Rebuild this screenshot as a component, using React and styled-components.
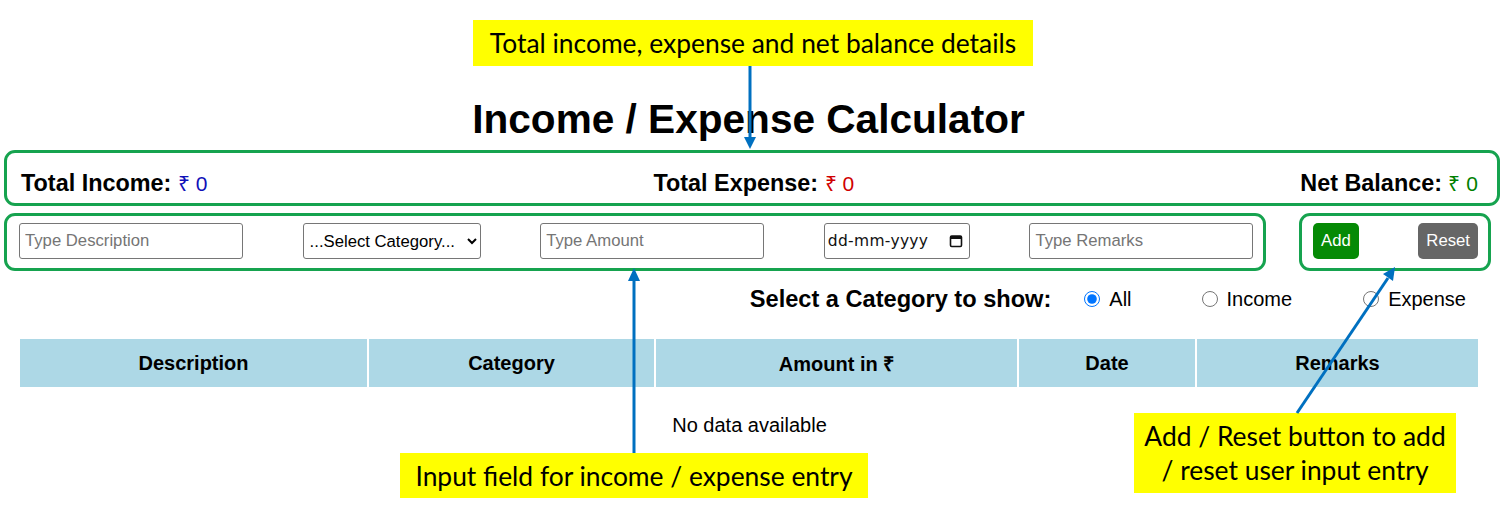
import React from 'react';
import styled, { createGlobalStyle } from 'styled-components';

const GlobalStyle = createGlobalStyle`
  * {
    box-sizing: border-box;
  }
  body {
    margin: 0;
    background: #fff;
    font-family: "Liberation Sans", Arial, sans-serif;
    color: #000;
  }
`;

const Page = styled.div`
  position: relative;
  width: 1510px;
  height: 513px;
  padding: 96px 32px 0 19px;
  overflow: hidden;
`;

const Title = styled.h1`
  margin: 0;
  text-align: center;
  font-size: 40.6px;
  line-height: 46px;
  font-weight: bold;
`;

const Summary = styled.div`
  display: flex;
  justify-content: space-between;
  align-items: center;
  height: 30px;
  margin-top: 26px;
  padding-left: 2px;
`;

const SummaryItem = styled.div`
  font-size: 23.4px;
  font-weight: bold;
  white-space: nowrap;
`;

const Amount = styled.span`
  font-weight: normal;
  font-size: 21px;
  color: ${(p) => p.$color};
`;

const EntryRow = styled.div`
  display: flex;
  justify-content: space-between;
  align-items: center;
  height: 36px;
  margin-top: 25px;
`;

const TextInput = styled.input`
  width: 224px;
  height: 36px;
  padding: 0 5px;
  border: 1px solid #767676;
  border-radius: 3px;
  font-family: "Liberation Sans", Arial, sans-serif;
  font-size: 16.7px;
  color: #000;
  &::placeholder {
    color: #757575;
  }
`;

const Select = styled.select`
  width: 178px;
  height: 36px;
  padding: 0 2px;
  border: 1px solid #767676;
  border-radius: 3px;
  background: #fff;
  font-family: "Liberation Sans", Arial, sans-serif;
  font-size: 16.7px;
  color: #000;
`;

const DateField = styled.label`
  display: flex;
  align-items: center;
  width: 146px;
  height: 36px;
  padding: 0 6px 0 3px;
  border: 1px solid #767676;
  border-radius: 3px;
  background: #fff;
`;

const DateText = styled.input`
  flex: 1;
  min-width: 0;
  border: none;
  outline: none;
  padding: 0;
  font-family: "DejaVu Sans", sans-serif;
  font-size: 15.5px;
  letter-spacing: 0.3px;
  color: #111;
  &::placeholder {
    color: #111;
  }
`;

const Button = styled.button`
  height: 36px;
  padding: 0 8px;
  border: none;
  border-radius: 5px;
  background: ${(p) => p.$bg};
  color: #fff;
  font-family: "Liberation Sans", Arial, sans-serif;
  font-size: 16.7px;
`;

const FilterRow = styled.div`
  display: flex;
  justify-content: flex-end;
  align-items: center;
  height: 30px;
  margin-top: 25px;
  padding-right: 12px;
`;

const FilterTitle = styled.span`
  font-size: 23.6px;
  font-weight: bold;
  margin-right: 33px;
`;

const RadioLabel = styled.label`
  display: flex;
  align-items: center;
  font-size: 20px;
  color: #000;
  margin-left: ${(p) => p.$gap || 0}px;
`;

const Radio = styled.input`
  width: 16px;
  height: 16px;
  margin: 0 9px 0 0;
  accent-color: #0075ff;
`;

const Table = styled.table`
  width: 1458px;
  margin: 25px 0 0 1px;
  border-collapse: collapse;
`;

const HeadCell = styled.th`
  width: ${(p) => p.$w}px;
  height: 48px;
  padding: 0;
  background: #add8e6;
  border-left: 2px solid #fff;
  font-size: 20px;
  font-weight: bold;
  text-align: center;
  &:first-child {
    border-left: none;
  }
`;

const Empty = styled.p`
  margin: 26px 0 0;
  text-align: center;
  font-size: 20px;
  line-height: 24px;
  padding-left: 2px;
`;

/* annotation layer */

const Outline = styled.div`
  position: absolute;
  left: ${(p) => p.$x}px;
  top: ${(p) => p.$y}px;
  width: ${(p) => p.$w}px;
  height: ${(p) => p.$h}px;
  border: 3px solid #16a34f;
  border-radius: 11px;
  pointer-events: none;
`;

const Callout = styled.div`
  position: absolute;
  left: ${(p) => p.$x}px;
  top: ${(p) => p.$y}px;
  width: ${(p) => p.$w}px;
  height: ${(p) => p.$h}px;
  display: flex;
  align-items: center;
  justify-content: center;
  text-align: center;
  background: #ffff00;
  font-family: Lato, "Open Sans", sans-serif;
  font-size: 26.4px;
  line-height: 34px;
  color: #000;
`;

const Arrows = styled.svg`
  position: absolute;
  left: 0;
  top: 0;
  pointer-events: none;
`;

const CalendarIcon = () => (
  <svg width="14" height="14" viewBox="0 0 14 14">
    <rect x="1.5" y="2" width="11" height="10.5" rx="1.2" fill="none" stroke="#111" strokeWidth="1.6" />
    <rect x="1.5" y="2" width="11" height="3" fill="#111" />
  </svg>
);

export default function App() {
  return (
    <>
      <GlobalStyle />
      <Page>
        <Title>Income / Expense Calculator</Title>

        <Summary>
          <SummaryItem>
            Total Income: <Amount $color="#1010b8">₹ 0</Amount>
          </SummaryItem>
          <SummaryItem>
            Total Expense: <Amount $color="#d00000">₹ 0</Amount>
          </SummaryItem>
          <SummaryItem>
            Net Balance: <Amount $color="#008000">₹ 0</Amount>
          </SummaryItem>
        </Summary>

        <EntryRow>
          <TextInput placeholder="Type Description" />
          <Select defaultValue="">
            <option value="">...Select Category...</option>
            <option value="income">Income</option>
            <option value="expense">Expense</option>
          </Select>
          <TextInput placeholder="Type Amount" />
          <DateField>
            <DateText placeholder="dd-mm-yyyy" />
            <CalendarIcon />
          </DateField>
          <TextInput placeholder="Type Remarks" />
          <Button $bg="#058a05">Add</Button>
          <Button $bg="#666666">Reset</Button>
        </EntryRow>

        <FilterRow>
          <FilterTitle>Select a Category to show:</FilterTitle>
          <RadioLabel>
            <Radio type="radio" name="cat" defaultChecked />
            All
          </RadioLabel>
          <RadioLabel $gap={70}>
            <Radio type="radio" name="cat" />
            Income
          </RadioLabel>
          <RadioLabel $gap={71}>
            <Radio type="radio" name="cat" />
            Expense
          </RadioLabel>
        </FilterRow>

        <Table>
          <thead>
            <tr>
              <HeadCell $w={348}>Description</HeadCell>
              <HeadCell $w={287}>Category</HeadCell>
              <HeadCell $w={363}>Amount in ₹</HeadCell>
              <HeadCell $w={178}>Date</HeadCell>
              <HeadCell $w={282}>Remarks</HeadCell>
            </tr>
          </thead>
        </Table>
        <Empty>No data available</Empty>

        <Outline $x={4} $y={150} $w={1496} $h={56} />
        <Outline $x={4} $y={213} $w={1262} $h={58} />
        <Outline $x={1299} $y={213} $w={192} $h={58} />

        <Callout $x={473} $y={20} $w={560} $h={46}>
          Total income, expense and net balance details
        </Callout>
        <Callout $x={400} $y={453} $w={468} $h={45}>
          Input field for income / expense entry
        </Callout>
        <Callout $x={1134} $y={413} $w={322} $h={80}>
          Add / Reset button to add
          <br />/ reset user input entry
        </Callout>

        <Arrows width="1510" height="513" viewBox="0 0 1510 513">
          <g stroke="#0070c0" strokeWidth="3" fill="#0070c0">
            <line x1="750" y1="66" x2="750" y2="139" />
            <polygon points="744,137 756,137 750,149" stroke="none" />
            <line x1="634" y1="453" x2="634" y2="279" />
            <polygon points="628,281 640,281 634,268" stroke="none" />
            <line x1="1297" y1="413" x2="1388" y2="278" />
            <polygon points="1395,267 1393,281 1383,274" stroke="none" />
          </g>
        </Arrows>
      </Page>
    </>
  );
}
